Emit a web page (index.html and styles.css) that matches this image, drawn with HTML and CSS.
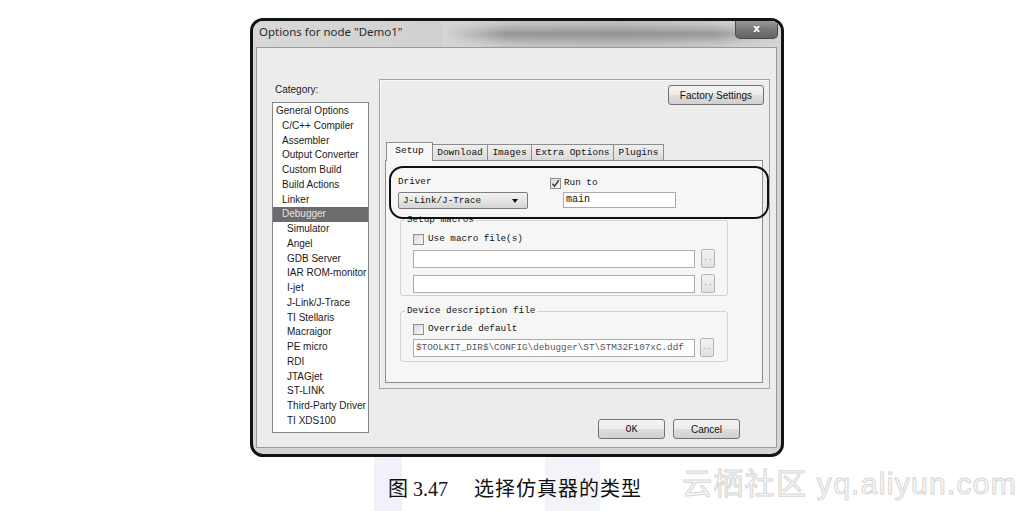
FILE: index.html
```html
<!DOCTYPE html>
<html lang="zh-CN">
<head>
  <meta charset="UTF-8">
  <title>Options for node "Demo1"</title>
  <link rel="stylesheet" href="styles.css">
</head>
<body>
<div class="page">

  <!-- dialog window -->
  <div class="dialog">
    <div class="titlebar">
      <span class="title">Options for node "Demo1"</span>
      <span class="close-btn">x</span>
    </div>

    <div class="client">
      <div class="main">

        <div class="category-col">
          <div class="category-label">Category:</div>
          <ul class="category-list">
            <li>General Options</li>
            <li class="lvl1">C/C++ Compiler</li>
            <li class="lvl1">Assembler</li>
            <li class="lvl1">Output Converter</li>
            <li class="lvl1">Custom Build</li>
            <li class="lvl1">Build Actions</li>
            <li class="lvl1">Linker</li>
            <li class="lvl1 selected">Debugger</li>
            <li class="lvl2">Simulator</li>
            <li class="lvl2">Angel</li>
            <li class="lvl2">GDB Server</li>
            <li class="lvl2">IAR ROM-monitor</li>
            <li class="lvl2">I-jet</li>
            <li class="lvl2">J-Link/J-Trace</li>
            <li class="lvl2">TI Stellaris</li>
            <li class="lvl2">Macraigor</li>
            <li class="lvl2">PE micro</li>
            <li class="lvl2">RDI</li>
            <li class="lvl2">JTAGjet</li>
            <li class="lvl2">ST-LINK</li>
            <li class="lvl2">Third-Party Driver</li>
            <li class="lvl2">TI XDS100</li>
          </ul>
        </div>

        <div class="right-col">
          <div class="panel">
            <div class="panel-top">
              <button class="btn btn-factory">Factory Settings</button>
            </div>

            <div class="tabs">
              <div class="tab active tab-setup">Setup</div>
              <div class="tab tab-download">Download</div>
              <div class="tab tab-images">Images</div>
              <div class="tab tab-extra">Extra Options</div>
              <div class="tab tab-plugins">Plugins</div>
            </div>

            <div class="tab-pane">
              <div class="run-row">
                <div class="driver-col">
                  <div class="field-label">Driver</div>
                  <div class="combo">J-Link/J-Trace<span class="combo-arrow"></span></div>
                </div>
                <div class="runto-col">
                  <div class="check-row">
                    <span class="box checked">
                      <svg width="9" height="9" viewBox="0 0 9 9"><path d="M1.5 4.8 L3.6 7.2 L7.8 1.2" fill="none" stroke="#333" stroke-width="1.4"/></svg>
                    </span>Run to
                  </div>
                  <div class="textbox runto">main</div>
                </div>
              </div>

              <fieldset class="group group-macros">
                <legend>Setup macros</legend>
                <div class="check-row"><span class="box"></span>Use macro file(s)</div>
                <div class="file-row first">
                  <div class="textbox path"></div>
                  <span class="browse">..</span>
                </div>
                <div class="file-row second">
                  <div class="textbox path"></div>
                  <span class="browse">..</span>
                </div>
              </fieldset>

              <fieldset class="group group-device">
                <legend>Device description file</legend>
                <div class="check-row"><span class="box"></span>Override default</div>
                <div class="file-row device">
                  <div class="textbox path disabled">$TOOLKIT_DIR$\CONFIG\debugger\ST\STM32F107xC.ddf</div>
                  <span class="browse">..</span>
                </div>
              </fieldset>
            </div>

            <!-- annotation frame from the book figure -->
            <div class="highlight"></div>
          </div>

          <div class="buttons">
            <button class="btn btn-dialog ok">OK</button>
            <button class="btn btn-dialog">Cancel</button>
          </div>
        </div>

      </div>
    </div>
  </div>

  <!-- figure caption -->
  <div class="footer">
    <div class="caption"><span class="fig-no">图 3.47</span><span class="fig-text">选择仿真器的类型</span></div>
    <div class="watermark">云栖社区 yq.aliyun.com</div>
  </div>

</div>
</body>
</html>
```

FILE: styles.css
```css
/* reset */
*, *::before, *::after {
  box-sizing: border-box;
}
html, body {
  margin: 0;
  padding: 0;
  background: #fff;
}
body {
  font-family: "Liberation Sans", Arial, sans-serif;
  font-size: 10px;
  color: #1c1c1c;
}

.page {
  width: 1031px;
  height: 511px;
  padding-top: 18px;
  overflow: hidden;
}

/* window frame */
.dialog {
  width: 534px;
  height: 439px;
  margin-left: 250px;
  border: 3px solid #141414;
  border-radius: 13px;
  background: #d5d5d5;
  padding: 0 4px 6px 3px;
  display: flex;
  flex-direction: column;
  overflow: hidden;
}

.titlebar {
  height: 26px;
  margin: 0 -4px 0 -3px;
  padding-left: 6px;
  display: flex;
  align-items: flex-start;
  background:
    linear-gradient(to right, rgba(213,213,213,1) 0%, rgba(213,213,213,0) 18%, rgba(213,213,213,0) 80%, rgba(213,213,213,1) 100%) 190px 0 / 340px 100% no-repeat,
    linear-gradient(to bottom, rgba(120,120,120,0) 10%, rgba(105,105,105,0.5) 50%, rgba(120,120,120,0) 92%) 190px 0 / 340px 100% no-repeat,
    linear-gradient(to right, #d8d8d8 0%, #d0d0d0 38%, #c2c2c2 50%, #bcbcbc 70%, #c8c8c8 88%, #d0d0d0 100%);
}
.title {
  margin-top: 4px;
  line-height: 14px;
  font-family: "Noto Sans", "Liberation Sans", sans-serif;
  font-size: 11.5px;
  color: #2a2a2a;
}
.close-btn {
  margin-left: auto;
  margin-right: 3px;
  width: 43px;
  height: 18px;
  border: 1px solid #4a4a4a;
  border-top: none;
  border-radius: 0 0 5px 5px;
  background: linear-gradient(#9a9a9a, #767676 50%, #646464);
  color: #fff;
  font-family: "DejaVu Sans", sans-serif;
  font-weight: bold;
  font-size: 11px;
  line-height: 15px;
  text-align: center;
}

/* client area */
.client {
  height: 401px;
  border: 1px solid #9a9a9a;
  background: #ececec;
  padding: 31px 0 0 15px;
}
.main {
  display: flex;
  align-items: flex-start;
  gap: 10px;
}

/* category list */
.category-col {
  width: 97px;
  padding-top: 4px;
}
.category-label {
  margin-left: 3px;
  line-height: 14px;
}
.category-list {
  list-style: none;
  margin: 5px 0 0;
  padding: 1px 0 0;
  width: 97px;
  height: 331px;
  border: 1px solid #858585;
  background: #fff;
}
.category-list li {
  height: 14.76px;
  line-height: 14.76px;
  padding-left: 3px;
  white-space: nowrap;
  color: #1a1a1a;
}
.category-list li.lvl1 {
  padding-left: 9px;
}
.category-list li.lvl2 {
  padding-left: 14px;
}
.category-list li.selected {
  background: #6c6c6c;
  color: #e4e4e4;
}

/* right side */
.right-col {
  width: 391px;
  display: flex;
  flex-direction: column;
}
.panel {
  position: relative;
  height: 310px;
  border: 1px solid #a4a4a4;
  box-shadow: inset 1px 1px 0 #f8f8f8;
  padding: 5px 6px 5px 5px;
}
.panel-top {
  display: flex;
  justify-content: flex-end;
}

.btn {
  height: 20px;
  padding: 0;
  border: 1px solid #727272;
  border-radius: 3px;
  background: linear-gradient(#f4f4f4, #ececec 48%, #dedede 52%, #d0d0d0);
  font-family: "Liberation Sans", Arial, sans-serif;
  font-size: 10px;
  color: #151515;
}
.btn-factory {
  width: 96px;
  margin-right: -1px;
}

/* tabs */
.tabs {
  height: 18px;
  margin-top: 37px;
  padding-left: 1px;
  display: flex;
  align-items: flex-end;
}
.tab {
  height: 16px;
  margin-right: -1px;
  border: 1px solid #8d8d8d;
  border-bottom: none;
  background: linear-gradient(#f0f0f0, #dadada);
  font-family: "Liberation Mono", "Courier New", monospace;
  font-size: 9.5px;
  line-height: 15px;
  text-align: center;
  color: #111;
}
.tab.active {
  position: relative;
  z-index: 1;
  height: 19px;
  margin-bottom: -1px;
  background: #f7f7f7;
  line-height: 16px;
}
.tab-setup { width: 47px; }
.tab-download { width: 56px; }
.tab-images { width: 45px; }
.tab-extra { width: 83px; }
.tab-plugins { width: 51px; }

.tab-pane {
  height: 223px;
  border: 1px solid #8d8d8d;
  background: #f6f6f6;
  font-family: "Liberation Mono", "Courier New", monospace;
  font-size: 9.3px;
  color: #111;
}

/* driver / run to */
.run-row {
  display: flex;
  gap: 22px;
  padding: 14px 0 0 12px;
}
.driver-col {
  width: 130px;
}
.field-label {
  line-height: 14px;
  margin-bottom: 3px;
}
.combo {
  position: relative;
  height: 17px;
  padding-left: 4px;
  border: 1px solid #7c7c7c;
  border-radius: 2px;
  background: linear-gradient(#f3f3f3, #e5e5e5 50%, #d5d5d5);
  line-height: 15px;
}
.combo-arrow {
  position: absolute;
  right: 9px;
  top: 6px;
  border-left: 3.5px solid transparent;
  border-right: 3.5px solid transparent;
  border-top: 4px solid #111;
}
.runto-col {
  padding-top: 1px;
}
.check-row {
  height: 14px;
  line-height: 14px;
  display: flex;
  align-items: center;
}
.box {
  width: 11px;
  height: 11px;
  margin-right: 4px;
  border: 1px solid #8f8f8f;
  background: linear-gradient(135deg, #d8d8d8, #f8f8f8);
  display: flex;
  align-items: center;
  justify-content: center;
}
.runto-col .box {
  margin-right: 3px;
}
.textbox {
  height: 16px;
  border: 1px solid #acacac;
  background: #fff;
  padding-left: 2px;
  font-family: "Liberation Mono", "Courier New", monospace;
  font-size: 10px;
  line-height: 14px;
  white-space: nowrap;
  overflow: hidden;
}
.textbox.runto {
  width: 113px;
  margin: 2px 0 0 13px;
}

/* group boxes */
.group {
  width: 328px;
  margin: 5px 0 0 14px;
  padding: 6px 0 2px 4px;
  border: 1px solid #d2d2d2;
  border-radius: 3px;
  min-width: 0;
}
.group legend {
  padding: 0 2px;
  line-height: 12px;
}
.group .check-row,
.group .file-row {
  margin-left: 8px;
}
.group-device {
  margin-top: 9px;
  padding-top: 5px;
  padding-bottom: 4px;
}
.file-row {
  height: 19px;
  display: flex;
  align-items: center;
  gap: 6px;
}
.file-row.first { margin-top: 3px; }
.file-row.second { margin-top: 6px; }
.file-row.device { margin-top: 2px; gap: 5px; }
.textbox.path {
  width: 282px;
  height: 18px;
  line-height: 16px;
}
.textbox.disabled {
  color: #555;
  font-size: 9.3px;
}
.browse {
  width: 14px;
  height: 19px;
  border: 1px solid #b4b4b4;
  border-radius: 2px;
  background: linear-gradient(#f2f2f2, #e2e2e2);
  color: #999;
  font-size: 8px;
  line-height: 15px;
  text-align: center;
}

/* annotation from the book */
.highlight {
  position: absolute;
  left: 9px;
  top: 86px;
  width: 380px;
  height: 53px;
  border: 2.5px solid #111;
  border-radius: 14px;
  z-index: 2;
  pointer-events: none;
}

/* OK / Cancel */
.buttons {
  margin-top: 30px;
  padding-right: 30px;
  display: flex;
  justify-content: flex-end;
  gap: 8px;
}
.btn-dialog {
  width: 67px;
}
.btn-dialog.ok {
  font-family: "Liberation Mono", monospace;
}

/* caption */
.footer {
  height: 54px;
  padding-top: 20px;
  display: flex;
  align-items: flex-start;
  background: linear-gradient(to right,
    transparent 374px, #f1f2f9 374px, #f1f2f9 402px, transparent 402px,
    transparent 545px, #f3f4fa 545px, #f3f4fa 600px, transparent 600px);
}
.caption {
  margin-left: 388px;
  font-family: "Liberation Serif", "Noto Sans CJK SC", serif;
  font-size: 20px;
  line-height: 24px;
  color: #111;
  white-space: nowrap;
}
.fig-text {
  margin-left: 26px;
  letter-spacing: 1px;
}
.watermark {
  margin-left: 40px;
  margin-top: -10px;
  font-family: "Liberation Sans", "Noto Sans CJK SC", sans-serif;
  font-size: 30px;
  letter-spacing: 1.3px;
  line-height: 34px;
  color: #fbfbfb;
  -webkit-text-stroke: 1px #d6d6d6;
  white-space: nowrap;
}
```
